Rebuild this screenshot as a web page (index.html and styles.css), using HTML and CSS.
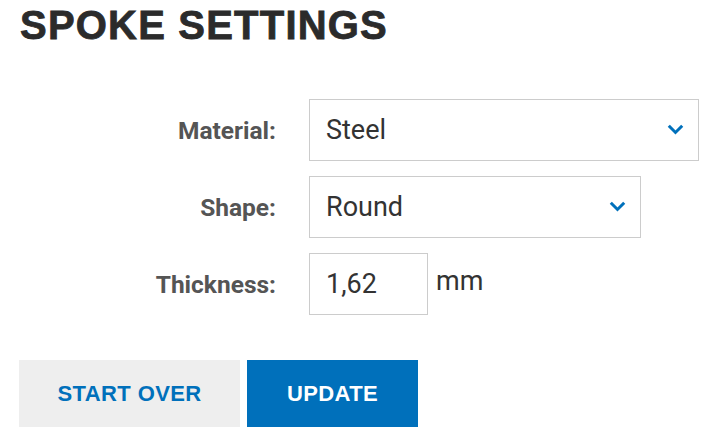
FILE: index.html
```html
<!DOCTYPE html>
<html lang="en">
  <head>
    <meta charset="UTF-8" />
    <meta name="viewport" content="width=device-width, initial-scale=1.0" />
    <title>Spoke Settings</title>
    <link rel="stylesheet" href="styles.css">
  </head>
  <body>
    <h1 class="title">SPOKE SETTINGS</h1>

    <!-- Settings form -->
    <form class="settings">
      <div class="fields">
        <label class="field-label" for="material">Material:</label>
        <div class="select-wrap select-wide">
          <select id="material" class="field-select">
            <option>Steel</option>
            <option>Aluminium</option>
            <option>Titanium</option>
          </select>
          <svg class="chevron" width="17" height="11" viewBox="0 0 17 11">
            <path d="M1.8 1.8 L8.5 8.5 L15.2 1.8" fill="none" stroke="#0070bb" stroke-width="3" />
          </svg>
        </div>

        <label class="field-label" for="shape">Shape:</label>
        <div class="select-wrap select-mid">
          <select id="shape" class="field-select">
            <option>Round</option>
            <option>Bladed</option>
          </select>
          <svg class="chevron" width="17" height="11" viewBox="0 0 17 11">
            <path d="M1.8 1.8 L8.5 8.5 L15.2 1.8" fill="none" stroke="#0070bb" stroke-width="3" />
          </svg>
        </div>

        <label class="field-label" for="thickness">Thickness:</label>
        <div class="thickness">
          <input id="thickness" class="field-input" type="text" value="1,62" />
          <span class="unit">mm</span>
        </div>
      </div>

      <div class="actions">
        <button type="reset" class="btn btn-secondary">START OVER</button>
        <button type="submit" class="btn btn-primary">UPDATE</button>
      </div>
    </form>
  </body>
</html>
```

FILE: styles.css
```css
body {
  margin: 0;
  padding: 0 19px;
  font-family: Roboto, "Liberation Sans", Arial, sans-serif;
  background: #ffffff;
  color: #333333;
}

/* Heading */
.title {
  margin: 0;
  padding-top: 3px;
  padding-left: 1px;
  font-family: "Liberation Sans", Arial, sans-serif;
  font-weight: bold;
  font-size: 40px;
  line-height: 44px;
  letter-spacing: 1.2px;
  -webkit-text-stroke: 0.8px #2b2b2b;
  color: #2b2b2b;
}

/* Form fields */
.settings {
  margin-top: 52px;
}

.fields {
  display: grid;
  grid-template-columns: 257px auto;
  column-gap: 33px;
  row-gap: 15px;
  align-items: center;
}

.field-label {
  text-align: right;
  font-weight: bold;
  font-size: 24.5px;
  color: #555555;
}

.select-wrap {
  position: relative;
}

.select-wide {
  width: 390px;
}

.select-mid {
  width: 332px;
}

.field-select {
  display: block;
  width: 100%;
  height: 62px;
  padding: 0 40px 0 16px;
  appearance: none;
  -webkit-appearance: none;
  background: #ffffff;
  border: 1px solid #cccccc;
  border-radius: 0;
  font-family: Roboto, "Liberation Sans", Arial, sans-serif;
  font-size: 27px;
  color: #333333;
  box-sizing: border-box;
}

.chevron {
  position: absolute;
  right: 15px;
  top: 25px;
  pointer-events: none;
}

.thickness {
  display: flex;
  align-items: center;
  gap: 8px;
}

.field-input {
  width: 119px;
  height: 62px;
  padding: 0 16px;
  border: 1px solid #cccccc;
  border-radius: 0;
  font-family: Roboto, "Liberation Sans", Arial, sans-serif;
  font-size: 27px;
  color: #333333;
  box-sizing: border-box;
}

.unit {
  font-size: 27px;
  color: #333333;
  margin-top: -6px;
}

/* Buttons */
.actions {
  display: flex;
  gap: 7px;
  margin-top: 45px;
}

.btn {
  height: 67px;
  padding: 0;
  border: none;
  border-radius: 0;
  font-family: "Liberation Sans", Arial, sans-serif;
  font-weight: bold;
  font-size: 22px;
  letter-spacing: 0.4px;
  cursor: pointer;
}

.btn-secondary {
  width: 221px;
  background-color: #eeeeee;
  color: #0070bb;
}

.btn-primary {
  width: 171px;
  background-color: #0070bb;
  color: #ffffff;
}
```
